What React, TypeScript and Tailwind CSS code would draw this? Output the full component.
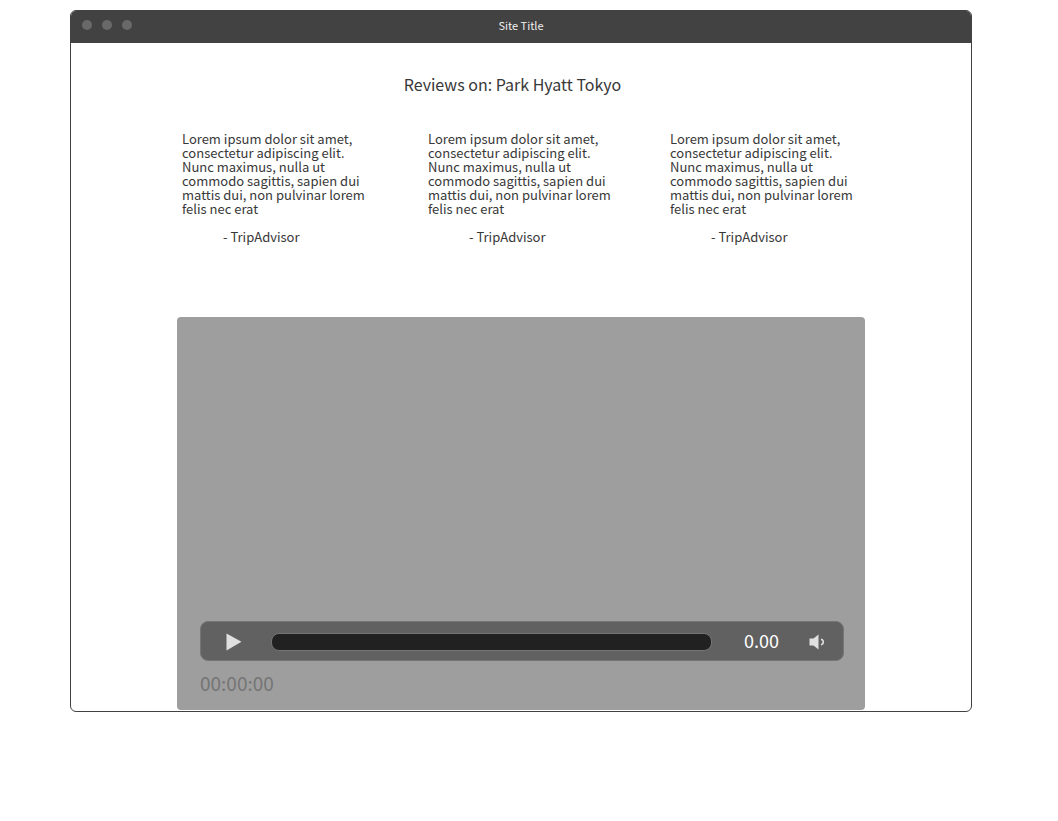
const REVIEWS = [
  { id: 'first', source: 'TripAdvisor' },
  { id: 'second', source: 'TripAdvisor' },
  { id: 'third', source: 'TripAdvisor' },
];

const REVIEW_TEXT =
  'Lorem ipsum dolor sit amet, consectetur adipiscing elit. Nunc maximus, nulla ut commodo sagittis, sapien dui mattis dui, non pulvinar lorem felis nec erat';

function TitleBar() {
  return (
    <header className="grid h-8 grid-cols-[1fr_auto_1fr] items-center bg-[#424242] px-[11px] pb-1">
      <div className="flex gap-2.5" aria-hidden="true">
        <span className="size-2.5 rounded-full bg-[#696969]" />
        <span className="size-2.5 rounded-full bg-[#696969]" />
        <span className="size-2.5 rounded-full bg-[#696969]" />
      </div>
      <span className="text-[11px] leading-4 text-[#f0f0f0]">Site Title</span>
    </header>
  );
}

function Review({ source }: { source: string }) {
  return (
    <figure className="w-[188px] text-[13px] leading-[14px]">
      <blockquote>{REVIEW_TEXT}</blockquote>
      <figcaption className="mt-3.5 pl-[41px]">- {source}</figcaption>
    </figure>
  );
}

function Player() {
  return (
    <section aria-label="Video" className="mt-[73px] flex h-[393px] flex-col justify-end rounded bg-[#9e9e9e] pr-[21px] pb-3 pl-[23px]">
      <div className="flex h-10 items-center rounded-lg border border-[#757575] bg-[#616161] pt-0.5 pr-[18px] pl-[25px]">
        <button type="button" aria-label="Play" className="shrink-0">
          <svg width="16" height="18" viewBox="0 0 16 18" className="block">
            <path d="M0.5 0.5 L15.5 8.8 L0.5 17.5 Z" fill="#e0e0e0" />
          </svg>
        </button>
        <div role="progressbar" aria-label="Progress" aria-valuenow={0} className="ml-[29px] h-[18px] flex-1 rounded-lg border border-[#757575] bg-[#212121]" />
        <span className="ml-8 pb-1 text-[18px] leading-6 text-white">0.00</span>
        <button type="button" aria-label="Volume" className="ml-[30px] shrink-0">
          <svg width="16" height="16" viewBox="0 0 16 16" className="block">
            <path d="M0.5 4.5 H4.5 L9.5 0.5 V15.5 L4.5 11.5 H0.5 Z" fill="#e0e0e0" />
            <path d="M12 5.2 Q14.3 5.8 14.3 8 Q14.3 10.2 12 10.8" fill="none" stroke="#e0e0e0" strokeWidth="1.5" />
          </svg>
        </button>
      </div>
      <time className="mt-2 pb-px text-[19px] leading-7 text-[#757575]">00:00:00</time>
    </section>
  );
}

export default function App() {
  return (
    <div className="min-h-screen bg-white pt-2.5 pr-[86px] pl-[70px] text-[#383838] [font-family:'Noto_Sans_CJK_SC',sans-serif]">
      <div className="overflow-hidden rounded-md border border-[#424242]">
        <TitleBar />
        <main className="px-[106px] pb-px">
          <h1 className="mt-[27px] pr-[17px] text-center text-[16px] leading-7">Reviews on: Park Hyatt Tokyo</h1>
          <div className="mt-[34px] grid grid-cols-[246fr_242fr_195fr] pl-[5px]">
            {REVIEWS.map((review) => (
              <Review key={review.id} source={review.source} />
            ))}
          </div>
          <Player />
        </main>
      </div>
    </div>
  );
}
